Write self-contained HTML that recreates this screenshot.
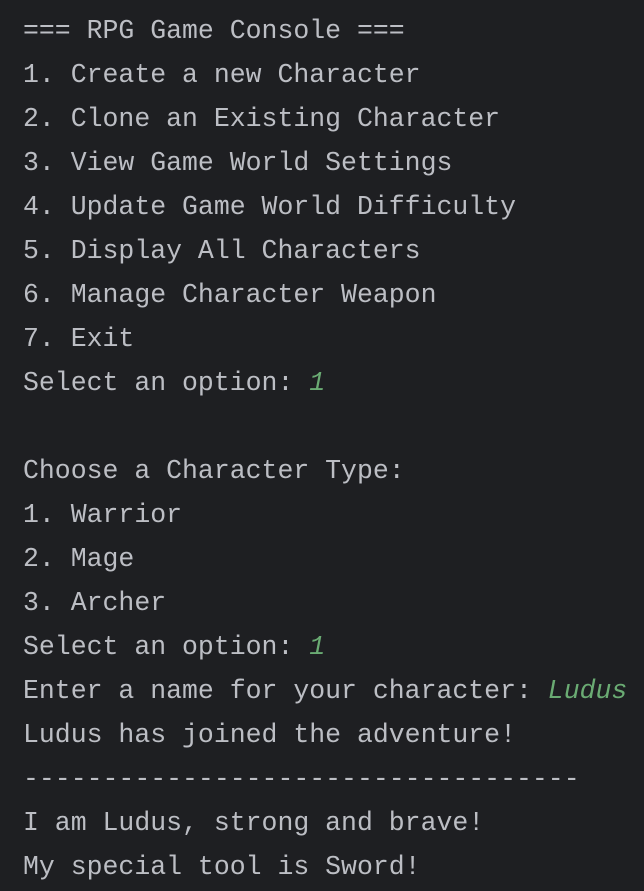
<!DOCTYPE html>
<html><head><style>
html,body{margin:0;padding:0;background:#1e1f22;width:644px;height:891px;overflow:hidden}
pre{margin:0;padding:9px 0 0 23px;font-family:"Liberation Mono",monospace;font-size:26.5px;line-height:44px;color:#bcbec4;white-space:pre}
i{color:#6aab73;font-style:italic}
</style></head><body><pre>=== RPG Game Console ===
1. Create a new Character
2. Clone an Existing Character
3. View Game World Settings
4. Update Game World Difficulty
5. Display All Characters
6. Manage Character Weapon
7. Exit
Select an option: <i>1</i>

Choose a Character Type:
1. Warrior
2. Mage
3. Archer
Select an option: <i>1</i>
Enter a name for your character: <i>Ludus</i>
Ludus has joined the adventure!
-----------------------------------
I am Ludus, strong and brave!
My special tool is Sword!</pre></body></html>
